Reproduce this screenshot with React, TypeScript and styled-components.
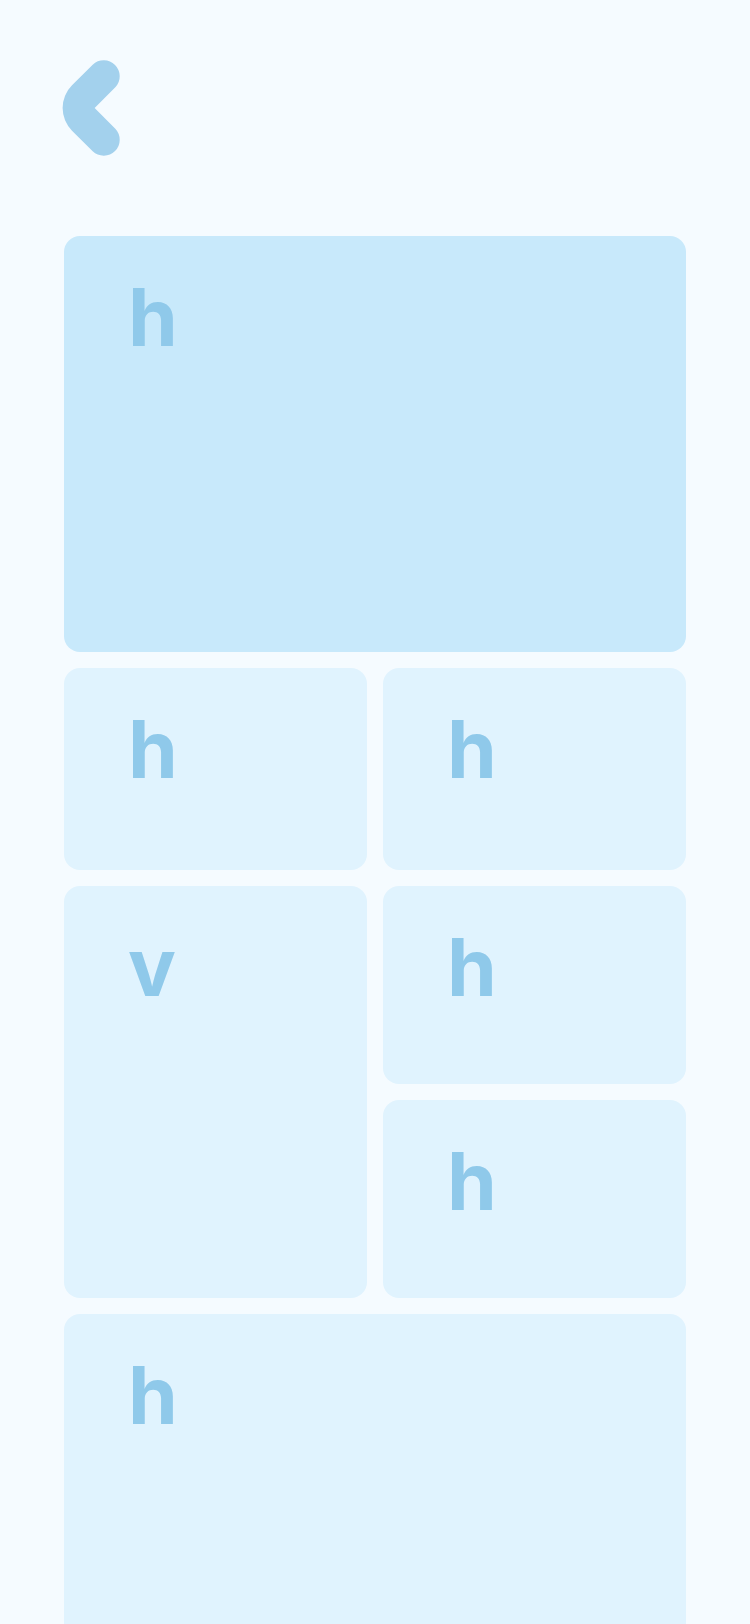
import React from "react";
import styled, { createGlobalStyle } from "styled-components";

const Global = createGlobalStyle`
  html, body { margin: 0; padding: 0; background: #f5fbff; }
  body { font-family: Inter, "Noto Sans", sans-serif; }
`;

const Page = styled.div`
  min-height: 1624px;
  background: #f5fbff;
  padding: 0 64px;
  box-sizing: border-box;
  overflow: hidden;
`;

const Header = styled.div`
  height: 236px;
  padding-top: 48px;
  box-sizing: border-box;
`;

const BackIcon = styled.div`
  width: 80px;
  height: 120px;
  margin-left: -16px;
  cursor: pointer;

  svg {
    display: block;
  }
`;

const Grid = styled.div`
  display: grid;
  grid-template-columns: 1fr 1fr;
  grid-template-rows: 416px 202px 198px 198px 400px;
  gap: 16px;
`;

const Card = styled.div<{ $span?: number; $rows?: number; $strong?: boolean }>`
  grid-column: span ${(p) => p.$span ?? 1};
  grid-row: span ${(p) => p.$rows ?? 1};
  background: ${(p) => (p.$strong ? "#c8e9fb" : "#e0f3fe")};
  border-radius: 16px;
  padding: 41px 0 0 64px;
  box-sizing: border-box;
`;

const Label = styled.span`
  display: block;
  font-family: Inter, "Noto Sans", sans-serif;
  font-weight: 700;
  font-size: 80px;
  line-height: 1;
  color: #8fc9ea;
`;

export default function App() {
  return (
    <>
      <Global />
      <Page>
        <Header>
          <BackIcon role="button" aria-label="Back">
            <svg width="80" height="120" viewBox="0 0 80 120">
              <path
                d="M44.69 16.69 A16 16 0 0 1 67.31 39.31 L46.63 60 L67.31 80.69 A16 16 0 0 1 44.69 103.31 L24 82.63 A32 32 0 0 1 24 37.37 Z"
                fill="#a3d1ed"
              />
            </svg>
          </BackIcon>
        </Header>
        <Grid>
          <Card $span={2} $strong>
            <Label>h</Label>
          </Card>
          <Card>
            <Label>h</Label>
          </Card>
          <Card>
            <Label>h</Label>
          </Card>
          <Card $rows={2}>
            <Label>v</Label>
          </Card>
          <Card>
            <Label>h</Label>
          </Card>
          <Card>
            <Label>h</Label>
          </Card>
          <Card $span={2}>
            <Label>h</Label>
          </Card>
        </Grid>
      </Page>
    </>
  );
}
